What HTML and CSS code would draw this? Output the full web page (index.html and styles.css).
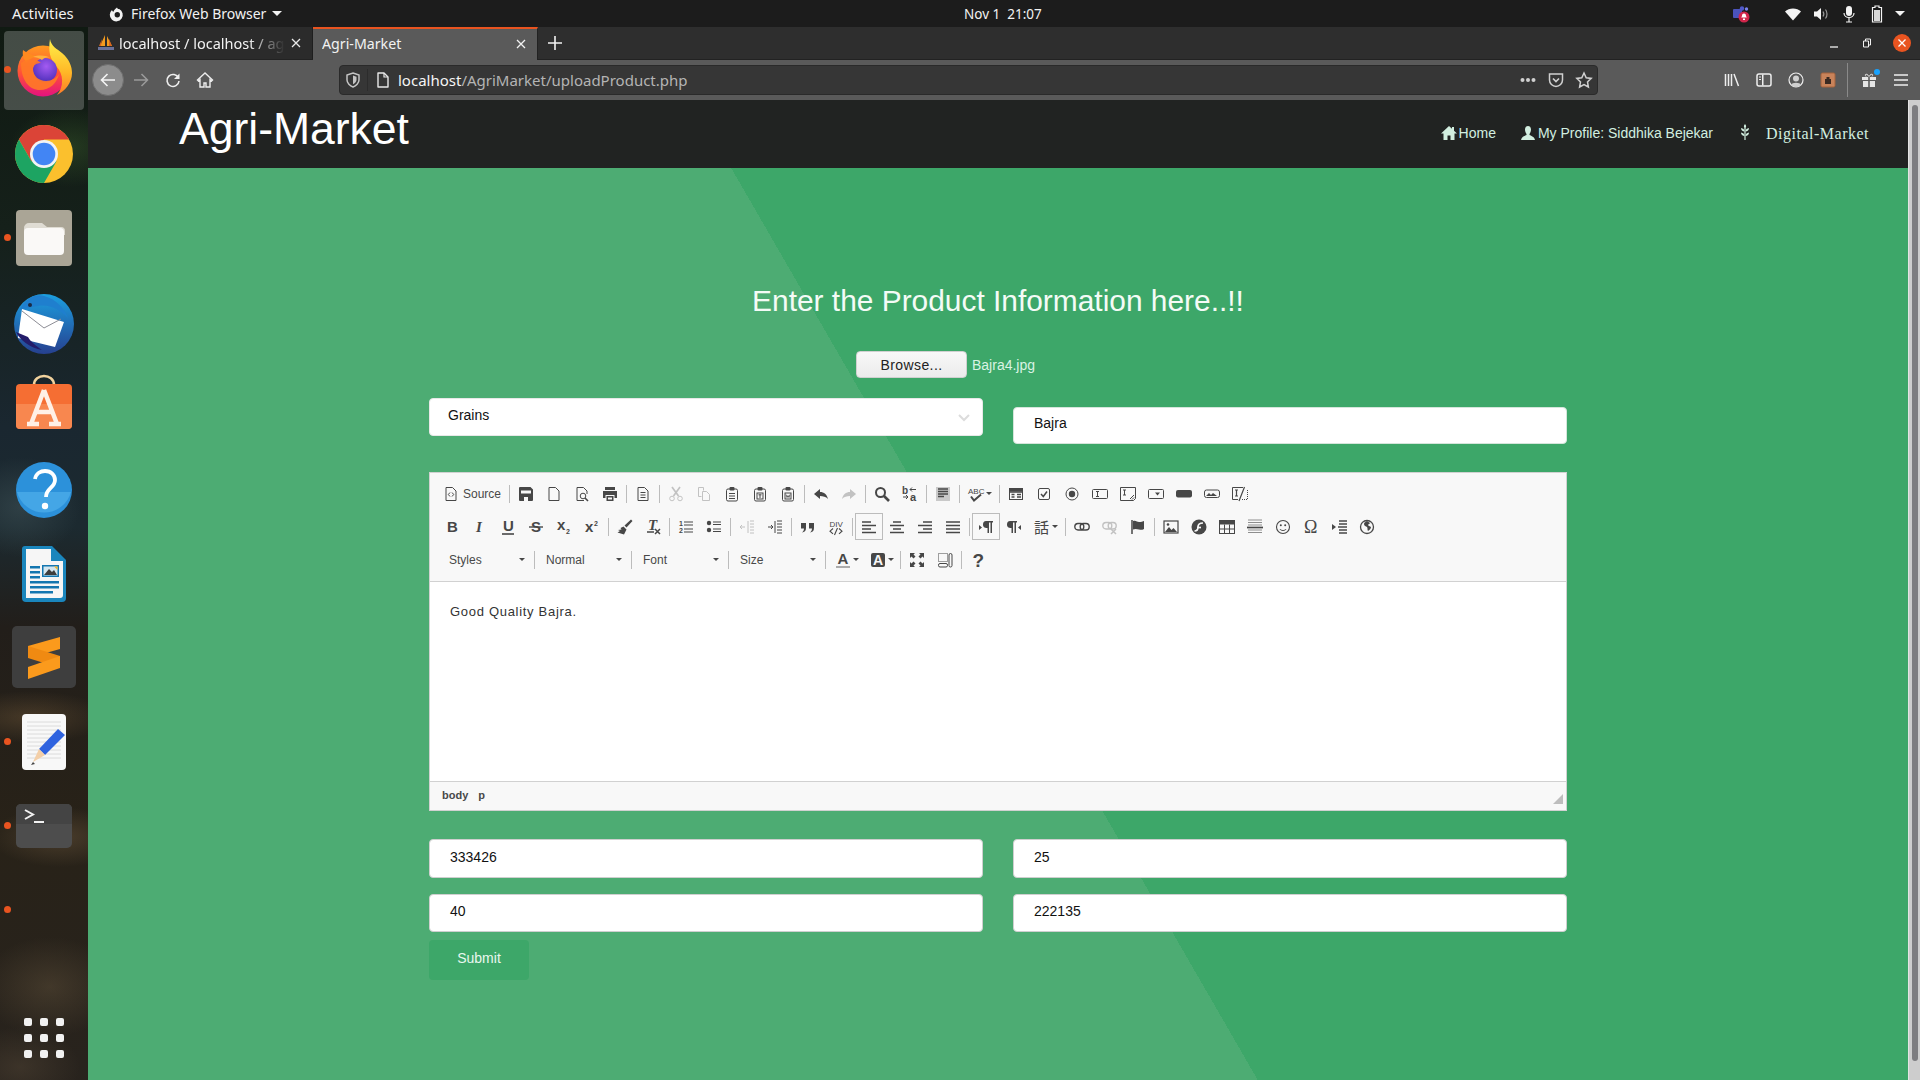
FILE: index.html
```html
<!DOCTYPE html>
<html lang="en">
<head>
<meta charset="utf-8">
<title>Agri-Market</title>
<link rel="stylesheet" href="styles.css">
</head>
<body>
<svg class="defs" width="0" height="0" aria-hidden="true">
  <defs>
    <linearGradient id="ffBody" x1="0" y1="0" x2="0" y2="1"><stop offset="0" stop-color="#ff9a1f"/><stop offset=".55" stop-color="#ff4f38"/><stop offset="1" stop-color="#e3127f"/></linearGradient>
    <linearGradient id="ffFlame" x1="0" y1="0" x2="0" y2="1"><stop offset="0" stop-color="#fff14a"/><stop offset=".6" stop-color="#ffb726"/><stop offset="1" stop-color="#ff7a2a"/></linearGradient>
    <radialGradient id="ffGlobe" cx=".55" cy=".35" r=".7"><stop offset="0" stop-color="#a45bf2"/><stop offset="1" stop-color="#4a2db8"/></radialGradient>
    <linearGradient id="tbBlue" x1="0" y1="0" x2="0" y2="1"><stop offset="0" stop-color="#1c9fe0"/><stop offset="1" stop-color="#26408f"/></linearGradient>
  </defs>
</svg>

<header class="topbar">
  <div class="top-left">
    <span class="activities">Activities</span>
    <span class="app-menu">
      <svg class="app-ico" viewBox="0 0 16 16"><path d="M8 1.500c.6 1 .8 1.600 2.200 1.600A6.500 6.500 0 1 1 3 4c.3 1 .8 1.500 1.500 1.700C5 4 6.300 2.700 8 1.500z" fill="#f2f2f2"/><circle cx="8.300" cy="8.800" r="2.700" fill="#1c1c1c"/></svg>
      <span>Firefox Web Browser</span>
      <i class="caret"></i>
    </span>
  </div>
  <span class="clock">Nov 1&nbsp; 21:07</span>
  <div class="tray">
    <svg class="tray-teams" viewBox="0 0 18 18"><rect x="1" y="4" width="9" height="9" rx="1" fill="#4b53bc"/><circle cx="10" cy="3.500" r="2.200" fill="#5059c9"/><circle cx="14.500" cy="4" r="1.700" fill="#7b83eb"/><circle cx="12" cy="12" r="5.500" fill="#d1264b"/><path d="M12 8.500c-1.500 0-2 1-2 2.500l-.8 1.500h5.600L14 11c0-1.500-.5-2.500-2-2.500z" fill="#fff"/><rect x="11" y="13.500" width="2" height="1.500" fill="#fff"/></svg>
    <svg class="tray-wifi" viewBox="0 0 16 16"><path d="M0 5.500C4 1.500 12 1.500 16 5.500L8 14.500z" fill="#f4f4f4"/></svg>
    <svg class="tray-vol" viewBox="0 0 16 16"><path d="M1 5.500h3L8 2v12L4 10.500H1z" fill="#f4f4f4"/><path d="M10 5.500c1 1.500 1 3.500 0 5M12.500 3.500c2 2.500 2 6.500 0 9" fill="none" stroke="#9a9a9a" stroke-width="1.200"/></svg>
    <svg class="tray-mic" viewBox="0 0 16 18"><rect x="5" y="1" width="6" height="10" rx="3" fill="#f4f4f4"/><path d="M3 8c0 6 10 6 10 0M8 12.500V17M5 17h6" fill="none" stroke="#f4f4f4" stroke-width="1.200"/></svg>
    <svg class="tray-bat" viewBox="0 0 12 18"><path d="M4 1h4v1.500h2.500V17h-9V2.500H4z" fill="none" stroke="#f4f4f4" stroke-width="1.200"/><rect x="3" y="5" width="6" height="11" fill="#d8d8d8"/></svg>
    <i class="caret tray-caret"></i>
  </div>
</header>

<div class="desktop">
  <nav class="dock">
    <div class="dock-item active"><i class="run-dot"></i>
      <svg class="ic64" viewBox="0 0 64 64"><g transform="translate(0 -5)"><circle cx="31" cy="38" r="25.500" fill="url(#ffBody)"/><path d="M38 6c1 7 7 10 12 14 8 7 10 14 10 20 0 10-7 18-15 22 7-8 7-21-1-29-6-7-8-15-6-27z" fill="url(#ffFlame)"/><path d="M11 17c-1 6 1 10 4 13 3-5 8-7 14-7-8 0-12-2-18-6z" fill="#ff8a1f"/><circle cx="33" cy="37" r="12" fill="url(#ffGlobe)"/><path d="M9 30c7-5 16-4 20 0-4 0-8 2-8 6 0 7 6 12 13 12 6 0 10-3 13-7-2 9-9 16-19 16-11 0-19-10-19-27z" fill="#ff7a26" opacity=".9"/><path d="M21 24c5-2 13-2 17 1-4-1-6 0-8 2-3-2-6-3-9-3z" fill="#ffb13d"/></g></svg>
    </div>
    <div class="dock-item">
      <svg class="ic58" viewBox="0 0 58 58"><circle cx="29" cy="29" r="29" fill="#fbc02d"/><path d="M3.900 14.500A29 29 0 0 1 54.100 14.500H29L16.400 36.300z" fill="#db4437"/><path d="M3.900 14.500L16.400 36.300H41.500L29 58A29 29 0 0 1 3.900 14.500z" fill="#1da462"/><circle cx="29" cy="29" r="14" fill="#f3f3f3"/><circle cx="29" cy="29" r="11.300" fill="#4285f4"/></svg>
    </div>
    <div class="dock-item"><i class="run-dot"></i>
      <svg class="ic56" viewBox="0 0 56 56"><rect width="56" height="56" rx="4" fill="#aaa596"/><path d="M8 18a5 5 0 0 1 5-5h13l5 4h14a4 4 0 0 1 4 4v4H8z" fill="#dfdcd3"/><rect x="8" y="18" width="40" height="27" rx="4" fill="#faf9f7"/></svg>
    </div>
    <div class="dock-item">
      <svg class="ic64 bird" viewBox="0 0 64 64"><circle cx="32" cy="34" r="30" fill="url(#tbBlue)"/><path d="M8 20c4-10 14-17 24-14 12 3 20 12 24 22-8-8-18-14-30-12-6 1-12 2-18 4z" fill="#1f7fce"/><path d="M10 19l42 13-9 25-37-9z" fill="#fff"/><path d="M10 21l22 17 17-9" fill="none" stroke="#8d8d95" stroke-width="1"/><circle cx="18" cy="15" r="2" fill="#1c2a44"/><path d="M4 42c4 8 14 16 26 18-6-4-12-9-14-13z" fill="#241c6a"/></svg>
    </div>
    <div class="dock-item">
      <svg class="ic56 store" viewBox="0 0 56 54"><path d="M18 10c0-12 20-12 20 0" fill="none" stroke="#f1d29d" stroke-width="2.500"/><rect y="9" width="56" height="45" rx="4" fill="#f56e33"/><path d="M0 29h56v21a4 4 0 0 1-4 4H4a4 4 0 0 1-4-4z" fill="#f8874f"/><path d="M28 15L15 49M28 15l13 34M19 37h18M11 49h12M33 49h12" fill="none" stroke="#fff0e6" stroke-width="4.500"/></svg>
    </div>
    <div class="dock-item">
      <svg class="ic56" viewBox="0 0 56 56"><circle cx="28" cy="28" r="28" fill="#2c91da"/><path d="M1 30h54a28 28 0 0 1-54 0z" fill="#44a6e6"/><path d="M19 17c1-6 6-8 10-8 6 0 10 4 10 9 0 8-9 8-9 17" fill="none" stroke="#fff" stroke-width="3.800"/><circle cx="29" cy="44" r="3.200" fill="#fff"/></svg>
    </div>
    <div class="dock-item">
      <svg class="ic44" viewBox="0 0 44 56"><path d="M3 0h27l14 14v38a4 4 0 0 1-4 4H4a4 4 0 0 1-4-4V3a3 3 0 0 1 3-3z" fill="#1a86bd"/><path d="M4 3h25v12h12v34a3 3 0 0 1-3 3H4z" fill="#f6f6f6"/><path d="M8 20h10v2.500H8zM8 25h10v2.500H8zM8 30h10v2.500H8zM8 35h29v2.500H8zM8 40h29v2.500H8zM8 45h23v2.500H8z" fill="#1376b0"/><rect x="20" y="19" width="17" height="12" fill="#1376b0"/><rect x="21.500" y="20.500" width="14" height="9" fill="#d4e6ef"/><path d="M22 29l5-6 3 3 2-2 3 5z" fill="#3d3d3d"/><path d="M32 20.500h3.500V24z" fill="#f1b92c"/></svg>
    </div>
    <div class="dock-item">
      <svg class="ic64" viewBox="0 0 64 64"><rect width="64" height="62" rx="5" fill="#3e3e3e"/><path d="M16 20L48 11V23L16 32z" fill="#fb9a1c"/><path d="M16 20L48 30V42L16 32z" fill="#f08a12"/><path d="M48 30V42L16 53V41z" fill="#fb9a1c"/></svg>
    </div>
    <div class="dock-item"><i class="run-dot"></i>
      <svg class="ic44" viewBox="0 0 44 56"><rect width="44" height="56" rx="4" fill="#f8f8f8"/><path d="M5 8h34M5 12h34M5 16h34M5 20h34M5 24h34M5 28h34M5 32h34M5 36h34M5 40h34M5 44h34" stroke="#d8d8d8" stroke-width=".9"/><path d="M36 15l-19 20 6 6 20-20-7-6z" fill="#2f63df"/><path d="M17 35l-6 13 12-7z" fill="#f3cfa8"/><path d="M11 48l-2 3 4-1z" fill="#444"/></svg>
    </div>
    <div class="dock-item"><i class="run-dot"></i>
      <svg class="ic56" viewBox="0 0 56 44"><rect width="56" height="44" rx="5" fill="#4d4d4d"/><path d="M0 20V5a5 5 0 0 1 5-5h46a5 5 0 0 1 5 5v15z" fill="#444"/><path d="M9 6l8 4.500-8 4.500" fill="none" stroke="#f2f2f2" stroke-width="2"/><rect x="18" y="17" width="10" height="2" fill="#f2f2f2"/></svg>
    </div>
    <div class="dock-item"><i class="run-dot"></i></div>
    <div class="show-apps">
      <i></i><i></i><i></i><i></i><i></i><i></i><i></i><i></i><i></i>
    </div>
  </nav>

  <div class="window">
    <div class="tabstrip">
      <div class="tab">
        <svg class="favicon" viewBox="0 0 18 18"><path d="M8 1L3 12h5zM10 2v10h5z" fill="#f29b1f"/><path d="M5 5L2 12h2zM12 5v7h3z" fill="#d9661f"/><path d="M1 13h16v3H1z" fill="#6a7198"/></svg>
        <span class="tab-title fade">localhost / localhost / agri</span>
        <svg class="tab-x" viewBox="0 0 10 10"><path d="M1 1l8 8M9 1l-8 8" stroke="#e8e8e8" stroke-width="1.300"/></svg>
      </div>
      <div class="tab current">
        <span class="tab-title">Agri-Market</span>
        <svg class="tab-x" viewBox="0 0 10 10"><path d="M1 1l8 8M9 1l-8 8" stroke="#f2f2f2" stroke-width="1.300"/></svg>
      </div>
      <svg class="new-tab" viewBox="0 0 14 14"><path d="M7 0v14M0 7h14" stroke="#f2f2f2" stroke-width="1.600"/></svg>
      <div class="win-controls">
        <svg class="win-min" viewBox="0 0 10 10"><path d="M1 8h8" stroke="#f2f2f2" stroke-width="1.300"/></svg>
        <svg class="win-max" viewBox="0 0 10 10"><path d="M3.500 3V1h5v6H6.500M1.500 3h5v6h-5z" fill="none" stroke="#f2f2f2"/></svg>
        <span class="win-close"><svg viewBox="0 0 10 10"><path d="M1.500 1.500l7 7M8.500 1.500l-7 7" stroke="#fff" stroke-width="1.300"/></svg></span>
      </div>
    </div>

    <div class="navbar">
      <span class="nav-back"><svg viewBox="0 0 16 16"><path d="M7.500 2L1.500 8l6 6M2 8h13" fill="none" stroke="#f4f4f4" stroke-width="1.600"/></svg></span>
      <svg class="nav-ico fwd" viewBox="0 0 16 16"><path d="M8.500 2l6 6-6 6M14 8H1" fill="none" stroke="#9b9b9b" stroke-width="1.500"/></svg>
      <svg class="nav-ico" viewBox="0 0 16 16"><path d="M13.500 6A6 6 0 1 0 14 9" fill="none" stroke="#eee" stroke-width="1.600"/><path d="M14.500 1.500v5.500H9z" fill="#eee"/></svg>
      <svg class="nav-ico" viewBox="0 0 16 16"><path d="M8 1L0.500 8l1 1L3 7.800V15h4v-4h2v4h4V7.800L14.500 9l1-1z" fill="none" stroke="#eee" stroke-width="1.400"/></svg>
      <div class="urlbar">
        <svg class="url-shield" viewBox="0 0 14 16"><path d="M7 1l6 2v5c0 3-3 6-6 7-3-1-6-4-6-7V3z" fill="none" stroke="#c4c4c4" stroke-width="1.500"/><path d="M7 3.500l3.500 1.200V8c0 1.800-1.800 3.500-3.500 4.200z" fill="#c4c4c4"/></svg>
        <i class="url-sep"></i>
        <svg class="url-page" viewBox="0 0 14 16"><path d="M2 1h6l4 4v10H2z" fill="none" stroke="#e8e8e8" stroke-width="1.400" stroke-linejoin="round"/><path d="M8 1v4h4" fill="none" stroke="#e8e8e8" stroke-width="1.200"/></svg>
        <span class="url-text"><b>localhost</b>/AgriMarket/uploadProduct.php</span>
        <span class="url-tools">
          <i class="dots"></i>
          <svg class="url-ico" viewBox="0 0 16 16"><path d="M1.500 2h13v6c0 3.500-3 6.500-6.500 6.500S1.500 11.500 1.500 8z" fill="none" stroke="#d0d0d0" stroke-width="1.500"/><path d="M5 6.500l3 3 3-3" fill="none" stroke="#d0d0d0" stroke-width="1.700"/></svg>
          <svg class="url-ico" viewBox="0 0 16 16"><path d="M8 1l2.200 4.700 5 .7-3.700 3.500.9 5.100L8 12.600 3.600 15l.9-5.100L.8 6.400l5-.7z" fill="none" stroke="#d0d0d0" stroke-width="1.500"/></svg>
        </span>
      </div>
      <div class="nav-right">
        <svg class="nav-ico" viewBox="0 0 16 16"><path d="M1.500 2v12M4.500 2v12M7.500 2v12M10 2l4.500 12" stroke="#eee" stroke-width="1.500"/></svg>
        <svg class="nav-ico" viewBox="0 0 16 16"><rect x="1" y="2" width="14" height="12" rx="2" fill="none" stroke="#eee" stroke-width="1.500"/><rect x="6" y="2.500" width="1.500" height="11" fill="#eee"/><path d="M3 5h2M3 7.500h2" stroke="#eee"/></svg>
        <svg class="nav-ico" viewBox="0 0 16 16"><circle cx="8" cy="8" r="7" fill="none" stroke="#eee" stroke-width="1.200"/><circle cx="8" cy="6.500" r="3" fill="#cfcfcf"/><path d="M3 13c1-3 9-3 10 0a7 7 0 0 1-10 0z" fill="#cfcfcf"/></svg>
        <svg class="nav-ico" viewBox="0 0 16 16"><rect x="1" y="1" width="14" height="14" rx="1.500" fill="#c9835a"/><rect x="1" y="1" width="14" height="14" rx="1.500" fill="none" stroke="#a5623c"/><path d="M5 12V7h1.500V5h3v2H11v5z" fill="#3b2a22"/></svg>
        <i class="nav-sep"></i>
        <span class="gift">
          <svg class="nav-ico" viewBox="0 0 16 16"><path d="M1 5h6.200v3H1zM8.800 5H15v3H8.800zM2 9h5.200v6H2zM8.800 9H14v6H8.800z" fill="#e6e6e6"/><path d="M5 4.500C3 2 6 1 8 4.500 10 1 13 2 11 4.500" fill="none" stroke="#e6e6e6"/></svg>
          <i class="gift-dot"></i>
        </span>
        <svg class="nav-ico menu" viewBox="0 0 16 16"><path d="M1 3h14M1 8h14M1 13h14" stroke="#eee" stroke-width="1.700"/></svg>
      </div>
    </div>

    <div class="viewport">
      <div class="page">
        <div class="site-header">
          <span class="brand">Agri-Market</span>
          <div class="site-nav">
            <a class="site-link">
              <svg class="site-ico" viewBox="0 0 16 16"><path d="M8 1L0 8.500h2.500V15h4v-4.500h3V15h4V8.500H16l-3-2.800V2h-2v1.800z" fill="#d2efe0"/></svg>Home</a>
            <a class="site-link profile">
              <svg class="site-ico" viewBox="0 0 16 16"><path d="M5 4.500C5 2 6.500 1 8 1s3 1 3 3.500c0 2-1 4-1.500 4.500v1c2 1 5 1.800 5.500 5H1c.5-3.200 3.500-4 5.500-5V9C6 8.500 5 6.500 5 4.500z" fill="#d2efe0"/></svg>My Profile: Siddhika Bejekar</a>
            <svg class="wheat" viewBox="0 0 10 16"><path d="M5 4v12" stroke="#d2efe0" stroke-width="1.200"/><path d="M5 0c1.500 1.500 1.500 3 0 4.500C3.500 3 3.500 1.500 5 0zM1 4c2 .3 3.500 1.500 3.500 3.500C2.500 7.500 1 6 1 4zM9 4c-2 .3-3.500 1.500-3.500 3.500C7.500 7.500 9 6 9 4zM1 8.500c2 .3 3.500 1.500 3.500 3.500C2.500 12 1 10.500 1 8.500zM9 8.500c-2 .3-3.500 1.500-3.500 3.500C7.500 12 9 10.500 9 8.500z" fill="#d2efe0"/></svg>
            <a class="market-link">Digital-Market</a>
          </div>
        </div>

        <main class="content">
          <h1 class="heading">Enter the Product Information here..!!</h1>
          <div class="file-row">
            <button class="browse">Browse...</button>
            <span class="file-name">Bajra4.jpg</span>
          </div>
          <div class="form-row first-row">
            <div class="field select-field">
              <span>Grains</span>
              <svg class="chev" viewBox="0 0 12 8"><path d="M1 1l5 5 5-5" fill="none" stroke="#dcdcdc" stroke-width="2"/></svg>
            </div>
            <div class="field name-field">Bajra</div>
          </div>

          <section class="editor">
            <div class="toolbar">
              <div class="tb-row">
                <span class="b source"><svg class="i" viewBox="0 0 16 16"><path d="M3 1.500h6.500l3.500 3.500v9.500H3z"/><path d="M7 6.500L5.300 8.500 7 10.500M9 6.500l1.700 2L9 10.500"/></svg><span>Source</span></span><i class="s"></i>
                <span class="b"><svg class="i" viewBox="0 0 16 16"><path class="f" fill-rule="evenodd" d="M2 1h10.500L15 3.500V14a1 1 0 0 1-1 1H2a1 1 0 0 1-1-1V2a1 1 0 0 1 1-1zM3 4.500v3h10v-3zM6 11v4h4v-4z"/></svg></span>
                <span class="b"><svg class="i" viewBox="0 0 16 16"><path d="M3 1.500h6.500l3.500 3.500v9.500H3z"/></svg></span>
                <span class="b"><svg class="i" viewBox="0 0 16 16"><path d="M10 14.500H3v-13h6.500L13 5v3"/><circle cx="9" cy="10" r="2.800"/><path d="M11 12l3 3" stroke-width="1.600"/></svg></span>
                <span class="b"><svg class="i" viewBox="0 0 16 16"><path class="f" fill-rule="evenodd" d="M3 1h10v3H3zM1 5h14v7h-2.500V9h-9v3H1zM4.500 10h7v5h-7zM6 11.500v2h4v-2z"/></svg></span><i class="s"></i>
                <span class="b"><svg class="i" viewBox="0 0 16 16"><path d="M3 1.500h6.500l3.500 3.500v9.500H3z"/><path d="M5.500 6.500h5M5.500 9h5M5.500 11.500h5"/></svg></span><i class="s"></i>
                <span class="b off"><svg class="i" viewBox="0 0 16 16"><path d="M4 1l6.500 9M12 1L5.500 10" stroke-width="1.700"/><circle cx="4" cy="12.500" r="2.300"/><circle cx="12" cy="12.500" r="2.300"/></svg></span>
                <span class="b off"><svg class="i" viewBox="0 0 16 16"><path d="M2.500 1.500h5v3M2.500 1.500v9h3"/><path d="M6.500 5.500h4l3 3v6h-7z"/></svg></span>
                <span class="b"><svg class="i" viewBox="0 0 16 16"><rect x="2.500" y="3" width="11" height="12" rx="1.500"/><rect class="f" x="5.500" y="1" width="5" height="3.500" rx="1"/><path d="M5 7.500h6M5 10h6M5 12.500h6"/></svg></span>
                <span class="b"><svg class="i" viewBox="0 0 16 16"><rect x="2.500" y="3" width="11" height="12" rx="1.500"/><rect class="f" x="5.500" y="1" width="5" height="3.500" rx="1"/><rect x="5" y="7" width="6" height="6"/><path d="M6.500 8.800h3M8 8.800V12"/></svg></span>
                <span class="b"><svg class="i" viewBox="0 0 16 16"><rect x="2.500" y="3" width="11" height="12" rx="1.500"/><rect class="f" x="5.500" y="1" width="5" height="3.500" rx="1"/><rect x="5" y="7" width="6" height="6"/><path d="M6 8.500l1 3 1-2 1 2 1-3" stroke-width=".8"/></svg></span><i class="s"></i>
                <span class="b"><svg class="i" viewBox="0 0 16 16"><path class="f" d="M7 3L1 8l6 5v-3c3 0 6 .8 8 3-1-4.500-4-7-8-7z"/></svg></span>
                <span class="b off"><svg class="i" viewBox="0 0 16 16"><path class="f" d="M9 3l6 5-6 5v-3c-3 0-6 .8-8 3 1-4.500 4-7 8-7z"/></svg></span><i class="s"></i>
                <span class="b"><svg class="i" viewBox="0 0 16 16"><circle cx="6.500" cy="6.500" r="4.500" stroke-width="2"/><path d="M10 10l5 5" stroke-width="2.600"/></svg></span>
                <span class="b"><svg class="i" viewBox="0 0 16 16"><text class="t t10" x="0" y="8">b</text><text class="t t11" x="8" y="15">a</text><path d="M8 3.500h6M10 1.500l-2 2 2 2M1 11h5M4 9l2 2-2 2"/></svg></span><i class="s"></i>
                <span class="b"><svg class="i" viewBox="0 0 16 16"><rect class="sel" x="1" y="1" width="14" height="14"/><path d="M3 3h10M3 5.500h10M3 8h10M3 10.500h6" stroke-width="1.400"/></svg></span><i class="s"></i>
                <span class="b spell"><svg class="i" viewBox="0 0 16 16"><text class="t t8" x="0" y="7.500">ABC</text><path d="M3 10.500l3 4 7-6" stroke-width="2"/></svg><i class="arr"></i></span><i class="s"></i>
                <span class="b"><svg class="i" viewBox="0 0 16 16"><rect x="1.500" y="2.500" width="13" height="11"/><path d="M2 6h12M3.500 8.500h3M3.500 11h3M9 8.500h4M9 11h4" stroke-width="1.300"/><rect class="f" x="1.500" y="2.500" width="13" height="3"/></svg></span>
                <span class="b"><svg class="i" viewBox="0 0 16 16"><rect x="2.500" y="2.500" width="11" height="11" rx="1.500"/><path d="M5 8l2.300 2.500L11 5.500" stroke-width="1.500"/></svg></span>
                <span class="b"><svg class="i" viewBox="0 0 16 16"><circle cx="8" cy="8" r="6"/><circle class="f" cx="8" cy="8" r="3.200"/></svg></span>
                <span class="b"><svg class="i" viewBox="0 0 16 16"><rect x=".5" y="3.500" width="15" height="9" rx="1"/><path d="M4 5.500h3M5.500 5.500v5M4 10.500h3"/></svg></span>
                <span class="b"><svg class="i" viewBox="0 0 16 16"><path d="M.5 1.500h15v11l-2 2H.5z"/><path d="M3 4h3M4.500 4v5M3 9h3M10 13l4-4M12 13.500l2-2"/></svg></span>
                <span class="b"><svg class="i" viewBox="0 0 16 16"><rect x=".5" y="3.500" width="15" height="9" rx="1"/><path class="f" d="M7 6.500h5l-2.500 3z"/></svg></span>
                <span class="b"><svg class="i" viewBox="0 0 16 16"><rect class="f" x="0" y="4" width="16" height="7.500" rx="2"/></svg></span>
                <span class="b"><svg class="i" viewBox="0 0 16 16"><rect x=".5" y="4" width="15" height="7.500" rx="2"/><path class="f" d="M2 10l3-3 2 2 2-2 4 3z"/></svg></span>
                <span class="b"><svg class="i" viewBox="0 0 16 16"><path d="M11 1.500H.5v12H6"/><path d="M15.500 4v9.500H10" stroke-dasharray="1 1"/><path d="M3 4h3M4.500 4v6M3 10h3M12.500 1L7 15" stroke-width="1.200"/></svg></span>
              </div>

              <div class="tb-row">
                <span class="b"><svg class="i" viewBox="0 0 16 16"><text class="t tb" x="3" y="13">B</text></svg></span>
                <span class="b"><svg class="i" viewBox="0 0 16 16"><text class="t tb ti" x="4" y="13">I</text></svg></span>
                <span class="b"><svg class="i" viewBox="0 0 16 16"><text class="t tb" x="3" y="12">U</text><path d="M2 15h12" stroke-width="1.600"/></svg></span>
                <span class="b"><svg class="i" viewBox="0 0 16 16"><text class="t tb" x="3" y="13">S</text><path d="M1 8h14" stroke-width="1.400"/></svg></span>
                <span class="b"><svg class="i" viewBox="0 0 16 16"><text class="t tb11" x="1" y="11">x</text><text class="t t7" x="10" y="15">2</text></svg></span>
                <span class="b"><svg class="i" viewBox="0 0 16 16"><text class="t tb11" x="1" y="13">x</text><text class="t t7" x="10" y="7">2</text></svg></span><i class="s"></i>
                <span class="b"><svg class="i" viewBox="0 0 16 16"><path class="f" d="M14 .5l1.500 1.500-6 6.500L7.500 6.500zM6.500 7.500l3 3-2.500 5L.5 13.500l2.500-1.500-2-1 3.500-.5-1-1.500z"/></svg></span>
                <span class="b"><svg class="i" viewBox="0 0 16 16"><text class="t tb ti" x="3" y="11">T</text><path d="M2 13h7" stroke-width="1.500"/><path d="M10 10l5 5M15 10l-5 5" stroke-width="1.500"/></svg></span><i class="s"></i>
                <span class="b"><svg class="i" viewBox="0 0 16 16"><text class="t t7" x="1" y="7">1</text><text class="t t7" x="1" y="14">2</text><path d="M6 3h9M6 6h9M6 10h9M6 13h9" stroke-width="1.200"/></svg></span>
                <span class="b"><svg class="i" viewBox="0 0 16 16"><circle class="f" cx="3" cy="4" r="2.200"/><circle class="f" cx="3" cy="11" r="2.200"/><path d="M7 3h8M7 5.500h8M7 10h8M7 12.500h8" stroke-width="1.200"/></svg></span><i class="s"></i>
                <span class="b off"><svg class="i" viewBox="0 0 16 16"><path d="M9 2v12M11 2h4M11 5h4M11 8h4M11 11h4M11 14h4M1 8h5M3 6L1 8l2 2"/></svg></span>
                <span class="b"><svg class="i" viewBox="0 0 16 16"><path d="M8 2v12M10 2h5M10 5h5M10 8h5M10 11h5M10 14h5M1 8h5M4 6l2 2-2 2"/></svg></span><i class="s"></i>
                <span class="b"><svg class="i" viewBox="0 0 16 16"><path class="f" d="M1 4h5v5c0 3-1.500 4-4 4.500 1-1 2-2 2-4H1zM9 4h5v5c0 3-1.500 4-4 4.500 1-1 2-2 2-4H9z"/></svg></span>
                <span class="b"><svg class="i" viewBox="0 0 16 16"><text class="t t8" x="1.500" y="7.500">DIV</text><path d="M5 9.500l-3 2.700 3 2.700M11 9.500l3 2.700-3 2.700M9.500 9l-3 7" stroke-width="1.100"/></svg></span><i class="s"></i>
                <span class="b on"><svg class="i" viewBox="0 0 16 16"><path d="M1 3h9M1 6.500h14M1 10h9M1 13.500h14" stroke-width="1.700"/></svg></span>
                <span class="b"><svg class="i" viewBox="0 0 16 16"><path d="M4 3h8M1 6.500h14M4 10h8M1 13.500h14" stroke-width="1.700"/></svg></span>
                <span class="b"><svg class="i" viewBox="0 0 16 16"><path d="M6 3h9M1 6.500h14M6 10h9M1 13.500h14" stroke-width="1.700"/></svg></span>
                <span class="b"><svg class="i" viewBox="0 0 16 16"><path d="M1 3h14M1 6.500h14M1 10h14M1 13.500h14" stroke-width="1.700"/></svg></span><i class="s"></i>
                <span class="b on"><svg class="i" viewBox="0 0 16 16"><path class="f" d="M1 6l3 2.500L1 11zM8 2h7v1.500h-1V14h-1.500V3.500H11V14H9.500V9C6 9 5 7.500 5 5.500S6 2 8 2z"/></svg></span>
                <span class="b"><svg class="i" viewBox="0 0 16 16"><path class="f" d="M15 6l-3 2.500 3 2.500zM4 2h7v1.500h-1V14H8.500V3.500H7V14H5.500V9C2 9 1 7.500 1 5.500S2 2 4 2z"/></svg></span>
                <span class="b lang"><svg class="i" viewBox="0 0 16 16"><text class="t t14" x="0" y="14">話</text></svg><i class="arr"></i></span><i class="s"></i>
                <span class="b"><svg class="i" viewBox="0 0 16 16"><rect x=".8" y="4.500" width="9" height="6.500" rx="3.200" stroke-width="1.400"/><rect x="6.200" y="4.500" width="9" height="6.500" rx="3.200" stroke-width="1.400"/></svg></span>
                <span class="b off"><svg class="i" viewBox="0 0 16 16"><rect x=".8" y="3.500" width="9" height="6.500" rx="3.200" stroke-width="1.400"/><rect x="6.200" y="3.500" width="8" height="6.500" rx="3.200" stroke-width="1.400"/><path d="M9 10l5 5M14 10l-5 5" stroke-width="1.500"/></svg></span>
                <span class="b"><svg class="i" viewBox="0 0 16 16"><path d="M2 1v14" stroke-width="1.500"/><path class="f" d="M3 2c3-1 4 1 6 1s4-.5 5-1v8c-2 1-3 1-5 .5-2-.5-4-1-6 0z"/></svg></span><i class="s"></i>
                <span class="b"><svg class="i" viewBox="0 0 16 16"><rect x="1" y="2" width="14" height="12" stroke-width="1.200"/><path class="f" d="M2 13l4-5 2.500 3 2-2L14 13z"/><circle class="f" cx="5" cy="5.500" r="1.300"/></svg></span>
                <span class="b"><svg class="i" viewBox="0 0 16 16"><circle class="f" cx="8" cy="8" r="7.500"/><path d="M12 4c-4 0-5 2-5 4s-1 4-3.500 4" class="w" stroke-width="1.700"/><path d="M6 8.500h4" class="w" stroke-width="1.700"/></svg></span>
                <span class="b"><svg class="i" viewBox="0 0 16 16"><rect x=".5" y="1.500" width="15" height="13"/><rect class="f" x=".5" y="1.500" width="15" height="4"/><path d="M.5 10h15M5.500 5.500v9M10.500 5.500v9"/></svg></span>
                <span class="b"><svg class="i" viewBox="0 0 16 16"><path d="M1 1h14M1 3.500h14M1 6h14M1 11h14M1 13.500h14" stroke="#8e8e8e"/><path d="M0 8.500h16" stroke-width="1.700"/></svg></span>
                <span class="b"><svg class="i" viewBox="0 0 16 16"><circle cx="8" cy="8" r="6.500" stroke-width="1.100"/><circle class="f" cx="5.800" cy="6.300" r="1"/><circle class="f" cx="10.200" cy="6.300" r="1"/><path d="M4.800 10c1.500 2 4.900 2 6.400 0"/></svg></span>
                <span class="b"><svg class="i" viewBox="0 0 16 16"><text class="t tomega" x="1" y="14">Ω</text></svg></span>
                <span class="b"><svg class="i" viewBox="0 0 16 16"><path class="f" d="M1 5l4 3-4 3z"/><path d="M8 2h8M8 5h8M8 11h8M8 14h8M7 8h9" stroke-width="1.400"/></svg></span>
                <span class="b"><svg class="i" viewBox="0 0 16 16"><circle cx="8" cy="8" r="6.500" stroke-width="1.300"/><path class="f" d="M8 2c-1 1-3 1-3 3s2 2 3 3 0 3 1 4c2-1 3-3 3-4-1-1-3-1-3-2s2-1 2-2z"/></svg></span>
              </div>

              <div class="tb-row">
                <span class="combo first"><span>Styles</span><i class="arr"></i></span><i class="s"></i>
                <span class="combo"><span>Normal</span><i class="arr"></i></span><i class="s"></i>
                <span class="combo"><span>Font</span><i class="arr"></i></span><i class="s"></i>
                <span class="combo"><span>Size</span><i class="arr"></i></span><i class="s"></i>
                <span class="b color"><svg class="i" viewBox="0 0 16 16"><text class="t tb" x="2.500" y="12">A</text><path d="M1 15h14" stroke="#999" stroke-width="1.600"/></svg><i class="arr"></i></span>
                <span class="b color2"><svg class="i" viewBox="0 0 16 16"><rect class="f" x="1" y="1" width="14" height="14" rx="2"/><text class="t tbw" x="3" y="13">A</text></svg><i class="arr"></i></span><i class="s"></i>
                <span class="b"><svg class="i" viewBox="0 0 16 16"><path class="f" d="M1 1h5L4.500 2.500l2 2-2 2-2-2L1 6zM15 1v5l-1.500-1.500-2 2-2-2 2-2L10 1zM1 15v-5l1.500 1.500 2-2 2 2-2 2L6 15zM15 15h-5l1.500-1.500-2-2 2-2 2 2L15 10z"/></svg></span>
                <span class="b"><svg class="i" viewBox="0 0 16 16"><rect x="1.500" y="1.500" width="9" height="8" stroke-dasharray="1 1"/><rect x="1.500" y="11.500" width="9" height="3.500" rx="1.500"/><rect x="12" y="1.500" width="3" height="13.500" rx="1.500"/></svg></span><i class="s"></i>
                <span class="b"><svg class="i" viewBox="0 0 16 16"><text class="t thelp" x="2.500" y="15">?</text></svg></span>
              </div>
            </div>
            <div class="edit-area"><p>Good Quality Bajra.</p></div>
            <div class="path-bar">
              <span>body</span><span>p</span>
              <i class="resizer"></i>
            </div>
          </section>

          <div class="form-row row-a">
            <div class="field tall">333426</div>
            <div class="field tall">25</div>
          </div>
          <div class="form-row row-b">
            <div class="field raised">40</div>
            <div class="field raised">222135</div>
          </div>
          <button class="submit">Submit</button>
        </main>
      </div>
      <div class="scrollbar"><i></i></div>
    </div>
  </div>
</div>
</body>
</html>
```

FILE: styles.css
```css
* { box-sizing: border-box; }
html, body { margin: 0; height: 100%; overflow: hidden; }
body {
  width: 1920px; height: 1080px;
  display: flex; flex-direction: column;
  background: #1c1c1c;
  font-family: "Liberation Sans", Arial, sans-serif;
}
i { display: block; font-style: normal; }
svg { display: block; flex: none; overflow: visible; }
.defs { position: absolute; }

/* GNOME top bar */
.topbar {
  height: 27px; flex: none; display: flex; align-items: center;
  background: #1c1c1c; color: #f2f2f2;
  font: 14px "Noto Sans", sans-serif;
}
.top-left { width: 964px; display: flex; align-items: center; padding-left: 12px; }
.activities { width: 97px; font-size: 14.8px; line-height: 18px; margin-top: -1px; }
.app-menu { display: flex; align-items: center; }
.app-ico { width: 16px; height: 16px; margin-right: 6px; }
.caret { width: 0; height: 0; border: 5px solid transparent; border-top-color: #f2f2f2; border-bottom: 0; margin-left: 6px; }
.clock { font-size: 13.5px; white-space: nowrap; }
.tray { margin-left: auto; display: flex; align-items: center; padding-right: 15px; }
.tray svg { width: 16px; height: 16px; }
.tray .tray-teams { width: 18px; height: 18px; margin-right: 35px; }
.tray .tray-vol { margin-left: 12px; }
.tray .tray-mic { margin-left: 12px; height: 18px; }
.tray .tray-bat { margin-left: 14px; width: 12px; height: 18px; }
.tray-caret { margin-left: 12px; }

.desktop { flex: 1; display: flex; min-height: 0; }

/* Dock */
.dock {
  width: 88px; flex: none; position: relative;
  padding-top: 1px;
  display: flex; flex-direction: column;
  background:
    radial-gradient(70px 50px at 50px 960px, rgba(125,105,75,.3), transparent),
    radial-gradient(60px 40px at 20px 1040px, rgba(120,100,75,.25), transparent),
    radial-gradient(70px 30px at 60px 810px, rgba(150,120,85,.3), transparent),
    radial-gradient(80px 26px at 30px 690px, rgba(170,130,80,.25), transparent),
    radial-gradient(60px 40px at 70px 120px, rgba(70,110,50,.35), transparent),
    radial-gradient(60px 50px at 20px 480px, rgba(70,90,95,.45), transparent),
    linear-gradient(180deg, #101a12 0, #15201a 200px, #1a2730 400px, #1c2a30 500px, #221e1a 600px, #282218 800px, #28231e 1080px);
}
.dock-item { height: 84px; flex: none; display: flex; align-items: center; justify-content: center; position: relative; }
.dock-item.active::before {
  content: ""; position: absolute; left: 4px; top: 3px; width: 80px; height: 79px;
  border-radius: 4px; background: rgba(255,255,255,.22);
}
.dock-item svg { position: relative; }
.run-dot { position: absolute; left: 4px; top: 50%; width: 7px; height: 7px; margin-top: -4px; border-radius: 50%; background: #e95420; z-index: 1; }
.ic64 { width: 64px; height: 64px; }
.ic58 { width: 58px; height: 58px; }
.ic56 { width: 56px; }
.ic44 { width: 44px; height: 56px; }
.bird { margin-bottom: 0; }
.store { margin-bottom: 9px; }
.show-apps {
  position: absolute; left: 24px; top: 991px;
  display: grid; grid-template-columns: repeat(3, 8px); gap: 8px;
}
.show-apps i { width: 8px; height: 8px; border-radius: 2px; background: #f1f1f1; }

/* Firefox window */
.window { flex: 1; display: flex; flex-direction: column; min-width: 0; }
.tabstrip { height: 33px; flex: none; display: flex; background: #2e2e2e; color: #f2f2f2; font: 14.5px "Noto Sans", sans-serif; border-bottom: 1px solid #222; }
.tab { width: 225px; display: flex; align-items: center; padding: 0 11px 0 9px; position: relative; border-right: 1px solid #1e1e1e; background: #2b2b2b; }
.tab.current { background: #5a5a5a; border-top: 2px solid #e95420; padding-left: 9px; padding-bottom: 2px; height: 33px; border-right: 1px solid #222; }
.favicon { width: 18px; height: 18px; margin-right: 4px; }
.tab-title { flex: 1; white-space: nowrap; overflow: hidden; }
.current .tab-title { font-size: 14.2px; }
.fade { -webkit-mask-image: linear-gradient(90deg, #000 130px, transparent 166px); mask-image: linear-gradient(90deg, #000 130px, transparent 166px); }
.tab-x { width: 10px; height: 10px; }
.new-tab { width: 14px; height: 14px; margin: 9px 0 0 10px; }
.win-controls { margin-left: auto; display: flex; align-items: center; padding-right: 9px; }
.win-min { width: 10px; height: 10px; margin-right: 23px; margin-top: 2px; }
.win-max { width: 10px; height: 10px; margin-right: 21px; }
.win-close { width: 18px; height: 18px; border-radius: 50%; background: #e95420; display: flex; align-items: center; justify-content: center; }
.win-close svg { width: 10px; height: 10px; }

.navbar { height: 40px; flex: none; display: flex; align-items: center; background: #5a5a5a; padding-left: 4px; }
.nav-back { width: 32px; height: 32px; border-radius: 50%; background: #8c8c8c; border: 1px solid #6e6e6e; display: flex; align-items: center; justify-content: center; }
.nav-back svg { width: 16px; height: 16px; }
.nav-ico { width: 16px; height: 16px; }
.navbar > .nav-ico { margin-left: 16px; }
.navbar > .fwd { margin-left: 9px; }
.urlbar {
  margin-left: 126px; width: 1259px; height: 30px; flex: none;
  display: flex; align-items: center;
  background: #363636; border: 1px solid #2a2a2a; border-radius: 4px; padding-left: 6px; color: #b4b4b4;
  font: 15px "Noto Sans", sans-serif;
}
.url-shield { width: 14px; height: 16px; }
.url-sep { width: 1px; height: 22px; background: #2c2c2c; margin: 0 8px 0 7px; }
.url-page { width: 14px; height: 16px; margin-right: 8px; }
.url-text b { font-weight: 400; color: #f5f5f5; }
.url-tools { margin-left: auto; display: flex; align-items: center; padding-right: 5px; }
.dots { width: 4px; height: 4px; border-radius: 50%; background: #d0d0d0; box-shadow: 5.500px 0 0 #d0d0d0, -5.500px 0 0 #d0d0d0; margin-right: 6px; }
.url-ico { width: 16px; height: 16px; margin-left: 12px; }
.nav-right { margin-left: auto; display: flex; align-items: center; gap: 16px; padding-right: 11px; }
.nav-sep { width: 1px; height: 34px; background: #8a8a8a; margin: 0 -3px 0 -5px; }
.gift { position: relative; display: block; }
.gift-dot { position: absolute; right: -3px; top: -3px; width: 6px; height: 6px; border-radius: 50%; background: #17a2ff; }

/* Page */
.viewport { flex: 1; display: flex; min-height: 0; }
.page {
  flex: 1; min-width: 0; display: flex; flex-direction: column;
}
.site-header { height: 68px; flex: none; background: #212322; display: flex; padding: 0 39px 0 91px; }
.brand { color: #fff; font-size: 44.5px; line-height: 58px; }
.site-nav { margin-left: auto; display: flex; align-items: flex-start; padding-top: 23px; color: #d2efe0; font-size: 14px; line-height: 20px; }
.site-link { display: flex; align-items: center; white-space: nowrap; }
.site-ico { width: 16px; height: 16px; margin-right: 2px; }
.profile { margin-left: 24px; }
.wheat { width: 10px; height: 16px; margin: 1px 0 0 27px; }
.market-link { font: 16px/20px "Liberation Serif", serif; letter-spacing: .5px; margin: 1px 0 0 16px; white-space: nowrap; }

.content {
  flex: 1; min-height: 0;
  padding: 115px 341px 0 341px;
  background: linear-gradient(60deg, #4dac73 1013px, #3da769 1013px);
}
.heading { margin: 0 0 32px; font-weight: 400; font-size: 29.900px; line-height: 36px; color: #f4fbf6; text-align: center; white-space: nowrap; }
.file-row { display: flex; align-items: center; padding-left: 427px; height: 27px; margin-bottom: 20px; }
.browse {
  width: 111px; height: 27px; padding: 0; border: 1px solid #d0d0d0; border-radius: 4px;
  background: linear-gradient(#f8f8f8, #ebebeb); color: #222; font: 14px "Liberation Sans", sans-serif;
  letter-spacing: .4px;
}
.file-name { margin-left: 5px; color: #d9f3e4; font-size: 14px; }

.form-row { display: grid; grid-template-columns: 554px 554px; column-gap: 30px; align-items: start; }
.field {
  height: 38px; background: #fff; border: 1px solid #cfcfcf; border-radius: 4px;
  padding: 0 20px 3px; display: flex; align-items: center;
  font-size: 14px; color: #111;
}
.raised { padding-bottom: 5px; }
.first-row { margin-bottom: 28px; height: 46px; }
.select-field { border-color: #e8e8e8; justify-content: space-between; padding: 0 12px 4px 18px; }
.chev { width: 12px; height: 8px; margin-top: 5px; }
.name-field { margin-top: 9px; height: 37px; border-color: #d5e5db; padding-bottom: 5px; }
.row-a { margin: 28px 0 16px; }
.tall { height: 39px; }
.row-b { margin-bottom: 8px; }
.submit {
  display: block; width: 100px; height: 40px; padding: 0 0 4px; border: 0; border-radius: 4px;
  background: #3da769; color: #e9f7ef; font: 14px "Liberation Sans", sans-serif;
}

/* CKEditor */
.editor { height: 339px; display: flex; flex-direction: column; background: #f8f8f8; border: 1px solid #d1d1d1; }
.toolbar { flex: none; padding: 4px 0 0 8px; border-bottom: 1px solid #d1d1d1; height: 109px; }
.tb-row { height: 33px; display: flex; align-items: center; }
.b { width: 28px; height: 27px; flex: none; display: flex; align-items: center; justify-content: center; }
.i { width: 16px; height: 16px; fill: none; stroke: #474747; stroke-width: 1; }
.i .f { fill: #474747; stroke: none; }
.i .w { stroke: #f8f8f8; fill: none; }
.i .sel { fill: #c9c9c9; stroke: none; }
.i .t { fill: #474747; stroke: none; font-family: "Liberation Sans", sans-serif; }
.t7 { font-size: 7px; font-weight: 700; }
.t8 { font-size: 8px; }
.t10 { font-size: 10px; font-weight: 700; }
.t11 { font-size: 11px; font-weight: 700; }
.i .t14 { font-size: 15px; font-family: "Noto Sans CJK JP", sans-serif; }
.tb { font-size: 15px; font-weight: 700; }
.i .ti { font-style: italic; font-family: "Liberation Serif", serif; }
.tb11 { font-size: 15px; font-weight: 700; }
.i .tbw { fill: #f8f8f8; font-size: 14px; font-weight: 700; }
.i .tomega { font-size: 18px; font-family: "Liberation Serif", serif; }
.thelp { font-size: 19px; font-weight: 700; }
.off { opacity: .3; }
.on { border: 1px solid #bcbcbc; background: #f8f8f8; }
.s { width: 1px; height: 18px; margin: 0 2px; background: #bcbcbc; flex: none; }
.source { width: 69px; justify-content: flex-start; padding-left: 5px; font-size: 12px; color: #484848; }
.source span { margin-left: 4px; }
.spell { width: 35px; padding-left: 1px; }
.lang { width: 35px; }
.color { width: 36px; padding-left: 2px; }
.color2 { width: 34px; padding-left: 2px; }
.arr { width: 0; height: 0; border: 3px solid transparent; border-top: 3px solid #474747; border-bottom: 0; margin-left: 2px; flex: none; }
.combo { width: 92px; height: 27px; flex: none; display: flex; align-items: center; justify-content: space-between; padding: 0 7px 0 9px; font-size: 12px; color: #484848; }
.combo.first { width: 94px; padding-left: 11px; }
.edit-area { flex: 1; background: #fff; padding: 22px 20px 0; font-size: 13px; letter-spacing: .7px; color: #333; }
.edit-area p { margin: 0; line-height: 16px; }
.path-bar {
  height: 29px; flex: none; border-top: 1px solid #d1d1d1; background: #f8f8f8;
  display: flex; align-items: center; gap: 10px; padding: 0 0 3px 12px; position: relative;
  font-size: 11px; font-weight: 700; color: #484848;
}
.resizer { position: absolute; right: 3px; bottom: 6px; width: 0; height: 0; border-left: 10px solid transparent; border-bottom: 10px solid #bdbdbd; }

/* Scrollbar */
.scrollbar { width: 12px; flex: none; background: #cdcdcd; padding: 5px 3px 0; border-left: 1px solid #e4e4e4; }
.scrollbar i { width: 6px; height: 956px; border-radius: 3px; background: #7d7d80; }
```
